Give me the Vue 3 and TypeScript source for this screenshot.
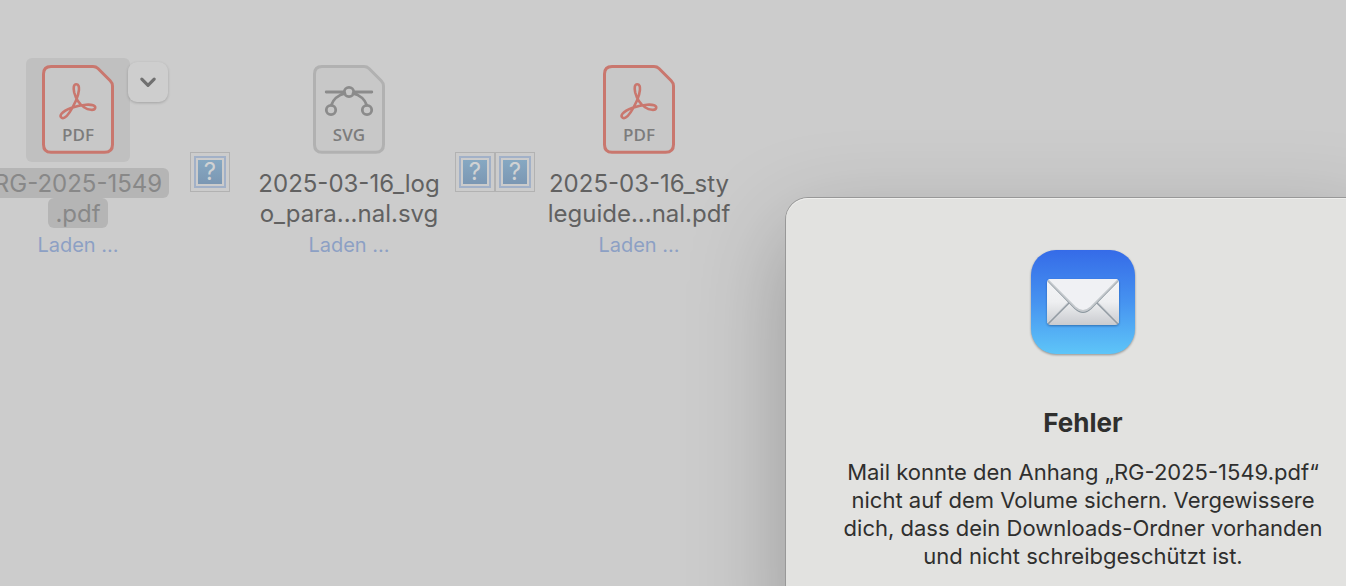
<script setup lang="ts">
type Kind = 'PDF' | 'SVG'

interface Attachment {
  kind: Kind
  lines: string[]
  selected: boolean
  missingAfter: number
}

const attachments: Attachment[] = [
  { kind: 'PDF', lines: ['RG-2025-1549', '.pdf'], selected: true, missingAfter: 1 },
  { kind: 'SVG', lines: ['2025-03-16_log', 'o_para...nal.svg'], selected: false, missingAfter: 2 },
  { kind: 'PDF', lines: ['2025-03-16_sty', 'leguide...nal.pdf'], selected: false, missingAfter: 0 },
]

const message: string[] = [
  'Mail konnte den Anhang „RG-2025-1549.pdf“',
  'nicht auf dem Volume sichern. Vergewissere',
  'dich, dass dein Downloads-Ordner vorhanden',
  'und nicht schreibgeschützt ist.',
]
</script>

<template>
  <main class="window">
    <section class="attachments">
      <template v-for="(file, i) in attachments" :key="i">
        <article class="file" :class="{ selected: file.selected }">
          <div class="thumb">
            <svg class="page" :class="file.kind.toLowerCase()" viewBox="0 0 72 89" aria-hidden="true">
              <path
                class="outline"
                d="M9 1.5H51Q54 1.5 56 3.5L68 15.500Q70.500 18 70.500 21V79.500Q70.500 87.300 62.500 87.300H9Q1.500 87.300 1.500 79.500V9Q1.500 1.500 9 1.500Z"
              />
              <path
                v-if="file.kind === 'PDF'"
                class="acrobat"
                d="M34.200 19.200C38.800 19.200 37 29 34 35.500C31 42 27 50.500 22.500 52.600C19.500 54 17.300 51.500 19.500 48.800C23 44.500 35 40.200 44 39.700C50 39.300 53.700 40.500 53.200 43C52.600 45.800 46.500 45.300 42 42.200C37 38.800 33.500 32.500 32.200 27.500C31.200 23 31.500 19.200 34.200 19.200Z"
              />
              <g v-else class="bezier">
                <path d="M13.200 27H31M41 27H58.800M32 28.500C24 30.500 20 35 18.400 40M40 28.500C48 30.500 52 35 53.600 40" />
                <circle cx="36" cy="27" r="4.700" />
                <circle cx="18" cy="45" r="4.700" />
                <circle cx="54" cy="45" r="4.700" />
              </g>
              <text x="36" y="76" text-anchor="middle">{{ file.kind }}</text>
            </svg>
            <button v-if="file.selected" class="more" type="button" aria-label="Optionen">
              <svg viewBox="0 0 16 16" aria-hidden="true"><path d="M2.500 5.500L8 11L13.500 5.500" /></svg>
            </button>
          </div>
          <div class="name">
            <span v-for="line in file.lines" :key="line">{{ line }}</span>
          </div>
          <div class="status">Laden ...</div>
        </article>
        <div v-if="file.missingAfter" class="missing-group" :class="{ single: file.missingAfter === 1 }">
          <span v-for="n in file.missingAfter" :key="n" class="missing"><i>?</i></span>
        </div>
      </template>
    </section>

    <section class="dialog" role="alertdialog" aria-labelledby="title" aria-describedby="message">
      <svg class="mail" viewBox="0 0 104 104" aria-hidden="true">
        <defs>
          <linearGradient id="sky" x1="0" y1="0" x2="0" y2="1">
            <stop offset="0" stop-color="#356be8" />
            <stop offset="0.500" stop-color="#4693f0" />
            <stop offset="1" stop-color="#5ec5f8" />
          </linearGradient>
          <linearGradient id="paper" x1="0" y1="0" x2="0" y2="1">
            <stop offset="0" stop-color="#f4f5f7" />
            <stop offset="0.500" stop-color="#eeeff1" />
            <stop offset="1" stop-color="#c9cbcf" />
          </linearGradient>
          <clipPath id="envelope"><rect x="16" y="29" width="72" height="46" rx="4" /></clipPath>
        </defs>
        <rect width="104" height="104" rx="25" fill="url(#sky)" />
        <g class="letter">
          <rect x="16" y="29" width="72" height="46" rx="4" fill="url(#paper)" />
          <g clip-path="url(#envelope)" fill="none">
            <path d="M17 74L38 53M87 74L66 53" stroke="#929ba3" stroke-width="1.600" />
            <path d="M15 74L37 52M89 74L67 52" stroke="#d4d7da" stroke-width="0.800" />
            <path d="M16 29L44 57.500Q52 65.500 60 57.500L88 29Z" fill="#f0f1f4" />
            <path d="M17 31L44 58.500Q52 66 60 58.500L87 31" stroke="#8c979f" stroke-width="1.300" />
            <path d="M17 30L44 57.200Q52 64.600 60 57.200L87 30" stroke="#c5c9cd" stroke-width="1.700" />
          </g>
        </g>
      </svg>
      <h1 id="title">Fehler</h1>
      <p id="message">
        <span v-for="line in message" :key="line">{{ line }}</span>
      </p>
    </section>
  </main>
</template>

<style>
body {
  margin: 0;
}
</style>

<style scoped>
.window {
  position: relative;
  box-sizing: border-box;
  min-height: 100vh;
  padding-top: 58px;
  overflow: hidden;
  background: #cccccc;
  font-family: Inter, "Liberation Sans", sans-serif;
}

.attachments {
  display: flex;
  align-items: flex-start;
  margin-left: -26px;
}

.file {
  display: flex;
  flex: 0 0 208px;
  flex-direction: column;
  align-items: center;
}

.thumb {
  position: relative;
  display: flex;
  justify-content: center;
  box-sizing: border-box;
  width: 104px;
  height: 104px;
  margin-bottom: 6px;
  padding-top: 7px;
  border-radius: 6px;
}

.selected .thumb {
  background: #c0c0c0;
}

.page {
  width: 72px;
  height: 89px;
}

.outline {
  fill: #c8c8c8;
  stroke-width: 3;
}

.pdf .outline {
  stroke: #c9776e;
}

.svg .outline {
  stroke: #b1b1b1;
}

.page text {
  fill: #7c7c7c;
  font: 600 17px "Open Sans", sans-serif;
}

.acrobat {
  fill: none;
  stroke: #c9776e;
  stroke-width: 2.600;
}

.bezier {
  fill: none;
  stroke: #8b8b8b;
  stroke-width: 2.800;
  stroke-linecap: round;
}

.more {
  position: absolute;
  top: 4px;
  left: 102px;
  display: flex;
  align-items: center;
  justify-content: center;
  width: 40px;
  height: 40px;
  padding: 0;
  border: 0;
  border-radius: 9px;
  background: #cecece;
  box-shadow: 0 1px 3px rgba(0, 0, 0, 0.2);
}

.more svg {
  width: 18px;
  height: 18px;
  fill: none;
  stroke: #707070;
  stroke-width: 2.800;
  stroke-linecap: round;
  stroke-linejoin: round;
}

.name {
  display: flex;
  flex-direction: column;
  align-items: center;
  color: #616161;
  font-size: 24px;
  line-height: 28px;
  white-space: nowrap;
}

.name span {
  padding: 2px 7px 0;
  border-radius: 6px;
}

.selected .name {
  color: #888888;
}

.selected .name span {
  background: #b5b5b5;
}

.status {
  color: #8ca0c4;
  font-size: 20px;
  line-height: 34px;
}

.missing-group {
  display: flex;
  margin: 94px 0 0 2px;
}

.missing-group.single {
  margin: 94px 15px 0 8px;
}

.missing {
  box-sizing: border-box;
  width: 40px;
  height: 40px;
  padding: 3px;
  border: 1px solid #b2b2b2;
}

.missing i {
  display: block;
  box-sizing: border-box;
  width: 32px;
  height: 32px;
  border: 2px solid #a2b1c8;
  background: linear-gradient(#86a8c2, #7b97b3) content-box;
  padding: 2px;
  color: #d0d2d3;
  font-size: 24px;
  font-style: normal;
  font-weight: 400;
  line-height: 24px;
  text-align: center;
}

.dialog {
  position: absolute;
  top: 198px;
  right: -34px;
  bottom: -60px;
  left: 786px;
  display: flex;
  flex-direction: column;
  align-items: center;
  box-sizing: border-box;
  padding-top: 52px;
  border-radius: 22px;
  background: #e2e2e0;
  box-shadow: 0 0 0 1px #989898, 0 32px 96px rgba(0, 0, 0, 0.25), inset 0 1px 0 #efefed;
  color: #2f2f2e;
}

.mail {
  width: 104px;
  height: 104px;
  overflow: visible;
  filter: drop-shadow(0 1px 1px rgba(0, 0, 0, 0.36));
}

.letter {
  filter: drop-shadow(0 1px 1px rgba(0, 40, 100, 0.45));
}

h1 {
  margin: 52px 0 18px;
  font-size: 26px;
  font-weight: 700;
  line-height: 34px;
}

p {
  margin: 0;
  font-size: 22px;
  line-height: 28px;
  text-align: center;
  white-space: nowrap;
}

p span {
  display: block;
}
</style>
